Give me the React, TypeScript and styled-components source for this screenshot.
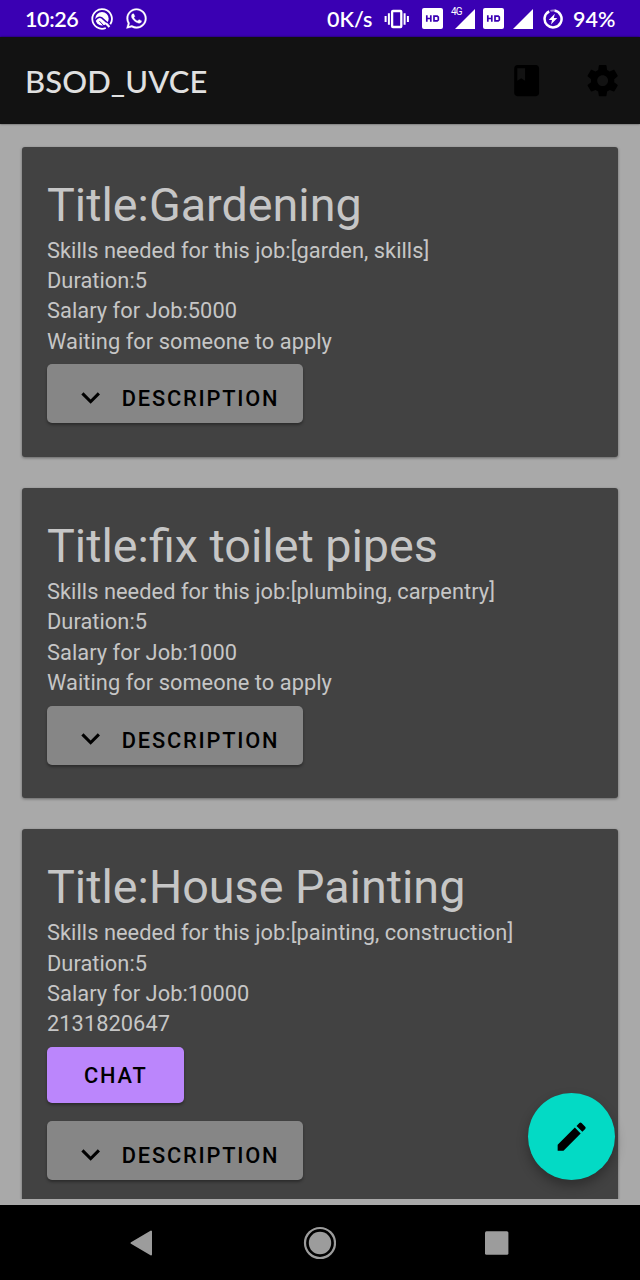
import React from "react";
import styled, { createGlobalStyle } from "styled-components";
import { MdBook, MdEdit, MdExpandMore } from "react-icons/md";
import { FaWhatsapp } from "react-icons/fa";

const GlobalStyle = createGlobalStyle`
  * { box-sizing: border-box; }
  body { margin: 0; background: #a9a9a9; font-family: Roboto, sans-serif; }
`;

const Screen = styled.div`
  position: relative;
  display: flex;
  flex-direction: column;
  width: 640px;
  height: 1280px;
  overflow: hidden;
  background: #a9a9a9;
`;

const StatusBar = styled.header`
  display: flex;
  align-items: center;
  flex: none;
  height: 37px;
  padding: 0 24px 0 25px;
  background: #3a00b3;
  color: #fff;
  svg { display: block; flex: none; }
`;

const StatusText = styled.span<{ $width: number; $spacing?: number }>`
  width: ${(p) => p.$width}px;
  padding-top: 1px;
  font: 600 21.5px/37px Lato, sans-serif;
  letter-spacing: ${(p) => p.$spacing ?? 0}px;
  white-space: nowrap;
`;

const Gap = styled.span<{ $grow?: boolean; $size?: number }>`
  flex: ${(p) => (p.$grow ? "1" : `0 0 ${p.$size}px`)};
`;

const SignalGroup = styled.span`
  display: flex;
  align-items: flex-start;
  height: 20px;
`;

const NetworkLabel = styled.span`
  width: 4px;
  margin-top: -3px;
  font: 400 10px/11px Roboto, sans-serif;
  letter-spacing: -0.8px;
`;

const AppBar = styled.div`
  display: flex;
  align-items: center;
  flex: none;
  height: 87px;
  padding: 0 19px 0 25px;
  background: #121212;
  box-shadow: 0 0 2px rgba(0, 0, 0, 0.6);
`;

const AppTitle = styled.h1`
  flex: 1;
  margin: 0;
  font: 500 31px/40px Lato, sans-serif;
  letter-spacing: 0.1px;
  color: #e0e0e0;
`;

const AppActions = styled.div`
  display: flex;
  gap: 38px;
  color: #000;
  svg { display: block; }
`;

const JobList = styled.main`
  display: flex;
  flex-direction: column;
  gap: 31px;
  flex: 1;
  min-height: 0;
  margin-bottom: 6px;
  padding: 22.5px 22px 0;
  overflow: hidden;
`;

const JobCard = styled.article<{ $height: number }>`
  flex: none;
  height: ${(p) => p.$height}px;
  padding: 27px 25px 0;
  border-radius: 3px;
  background: #424242;
  color: #c6c6c6;
  box-shadow: 0 1px 3px rgba(0, 0, 0, 0.4);
`;

const JobTitle = styled.h2`
  margin: 0 0 0.4px;
  font: 400 46.7px/62px Roboto, sans-serif;
`;

const JobLine = styled.p`
  margin: 0;
  font-size: 21.8px;
  line-height: 30.3px;
  letter-spacing: 0.05px;
`;

const Actions = styled.div`
  display: flex;
  flex-direction: column;
  align-items: flex-start;
  gap: 18px;
  margin-top: 7.2px;
`;

const Button = styled.button<{ $primary?: boolean }>`
  display: flex;
  align-items: center;
  width: ${(p) => (p.$primary ? 137 : 256)}px;
  height: ${(p) => (p.$primary ? 56.5 : 59)}px;
  padding: ${(p) => (p.$primary ? "2px 0 0 37px" : "0 0 0 25px")};
  border: 0;
  border-radius: 5px;
  background: ${(p) => (p.$primary ? "#bb86fc" : "#868686")};
  color: #000;
  font: 500 21.8px/30px Roboto, sans-serif;
  letter-spacing: 1.8px;
  box-shadow: 0 2px 3px rgba(0, 0, 0, 0.35);
`;

const Chevron = styled(MdExpandMore)`
  display: block;
  flex: none;
  margin: 7px 12.5px 0 0;
`;

const ButtonLabel = styled.span<{ $drop?: number }>`
  padding-top: ${(p) => p.$drop ?? 0}px;
`;

const ComposeButton = styled.button`
  position: absolute;
  left: 528px;
  top: 1093px;
  display: grid;
  place-items: center;
  width: 87px;
  height: 87px;
  padding: 0;
  border: 0;
  border-radius: 50%;
  background: #03dac5;
  color: #000;
  box-shadow: 0 6px 12px rgba(0, 0, 0, 0.3);
`;

const NavBar = styled.nav`
  display: flex;
  align-items: center;
  justify-content: space-between;
  flex: none;
  height: 75px;
  padding: 0 131px 0 129px;
  background: #000;
`;

const HdBadge = () => (
  <svg width="21" height="21" viewBox="0 0 21 21">
    <rect x="0" y="0" width="21" height="21" rx="2" fill="#fff" />
    <path
      d="M4.800 7.200v6.600M8.800 7.200v6.600M4.800 10.500h4M12 8.100h3.200l1.100 1v2.800l-1.100 1H12z"
      fill="none"
      stroke="#3a00b3"
      strokeWidth="1.7"
    />
  </svg>
);

const Signal = () => (
  <svg width="20" height="20" viewBox="0 0 20 20">
    <path d="M0 20L20 0V20z" fill="#fff" />
  </svg>
);

const AtNotification = () => (
  <svg width="22" height="22" viewBox="0 0 22 22">
    <path d="M19.300 16.300A9.800 9.800 0 1 0 14.800 20" fill="none" stroke="#fff" strokeWidth="1.800" />
    <circle cx="11" cy="10.800" r="6.700" fill="#fff" />
    <path d="M4 12.600C6 9.800 8.800 8.600 10.800 9.900L17.500 15.800" fill="none" stroke="#3a00b3" strokeWidth="1.600" />
    <path d="M8.500 13.200L13 18" stroke="#3a00b3" strokeWidth="1" />
    <path d="M15 15.300l3.400 3.700" stroke="#fff" strokeWidth="2.200" />
  </svg>
);

const Vibrate = () => (
  <svg width="26" height="20" viewBox="0 0 26 20" fill="none" stroke="#fff">
    <rect x="8.100" y="2" width="9.200" height="16" rx="0.800" strokeWidth="2.300" />
    <path d="M4.900 4.200v11.600M20.600 4.200v11.600" strokeWidth="2" />
    <path d="M1.600 7v6M23.900 7v6" strokeWidth="2" />
  </svg>
);

const SettingsIcon = () => (
  <svg width="37.3" height="37.3" viewBox="0 0 24 24" fill="currentColor">
    <path d="M19.430 12.980c.04-.32.07-.64.07-.98s-.03-.66-.07-.98l2.110-1.650c.19-.15.24-.42.12-.64l-2-3.460c-.12-.22-.39-.3-.61-.22l-2.490 1c-.52-.4-1.080-.73-1.690-.98l-.38-2.650C14.460 2.180 14.250 2 14 2h-4c-.25 0-.46.18-.49.42l-.38 2.650c-.61.25-1.170.59-1.690.98l-2.490-1c-.23-.09-.49 0-.61.22l-2 3.460c-.13.22-.07.49.12.64l2.110 1.650c-.04.32-.07.65-.07.98s.03.66.07.98l-2.110 1.650c-.19.15-.24.42-.12.64l2 3.460c.12.22.39.3.61.22l2.490-1c.52.4 1.080.73 1.690.98l.38 2.650c.03.24.24.42.49.42h4c.25 0 .46-.18.49-.42l.38-2.650c.61-.25 1.170-.59 1.690-.98l2.490 1c.23.09.49 0 .61-.22l2-3.460c.12-.22.07-.49-.12-.64l-2.110-1.650zM12 15.500c-1.930 0-3.500-1.570-3.500-3.500s1.570-3.500 3.500-3.500 3.500 1.570 3.500 3.500-1.570 3.500-3.500 3.500z" />
  </svg>
);

const BatterySaver = () => (
  <svg width="20" height="20" viewBox="0 0 20 20">
    <path d="M11.500 1.500A8.500 8.500 0 1 1 6.200 2.300" fill="none" stroke="#fff" strokeWidth="2.500" />
    <path d="M7.400 1.900A8.500 8.500 0 0 1 11.500 1.600" fill="none" stroke="#fff" strokeOpacity="0.5" strokeWidth="2" />
    <path d="M11.800 4.700L5.700 11h3.300l-1 4.600L14.300 9h-3.500z" fill="#fff" />
  </svg>
);

const BackIcon = () => (
  <svg width="24" height="26" viewBox="0 0 24 26">
    <path d="M2.500 13L22 1.500V24.500z" fill="#9c9c9c" stroke="#9c9c9c" strokeWidth="2" strokeLinejoin="round" />
  </svg>
);

const HomeIcon = () => (
  <svg width="34" height="34" viewBox="0 0 34 34">
    <circle cx="18" cy="17" r="15" fill="none" stroke="#9c9c9c" strokeWidth="2.200" />
    <circle cx="18" cy="17" r="11.200" fill="#9c9c9c" />
  </svg>
);

const RecentsIcon = () => (
  <svg width="24" height="24" viewBox="0 0 24 24">
    <rect x="0" y="0.300" width="23.400" height="23.400" rx="1.500" fill="#9c9c9c" />
  </svg>
);

type Job = {
  title: string;
  skills: string;
  salary: number;
  status: string;
  chat?: boolean;
};

const jobs: Job[] = [
  { title: "Gardening", skills: "garden, skills", salary: 5000, status: "Waiting for someone to apply" },
  { title: "fix toilet pipes", skills: "plumbing, carpentry", salary: 1000, status: "Waiting for someone to apply" },
  { title: "House Painting", skills: "painting, construction", salary: 10000, status: "2131820647", chat: true },
];

export default function App() {
  return (
    <Screen>
      <GlobalStyle />
      <StatusBar>
        <StatusText $width={66} $spacing={-0.4}>10:26</StatusText>
        <AtNotification />
        <Gap $size={12} />
        <FaWhatsapp size={23} stroke="currentColor" strokeWidth={6} />
        <Gap $grow />
        <StatusText $width={57}>0K/s</StatusText>
        <Vibrate />
        <Gap $size={12} />
        <HdBadge />
        <Gap $size={8} />
        <SignalGroup>
          <NetworkLabel>4G</NetworkLabel>
          <Signal />
        </SignalGroup>
        <Gap $size={8} />
        <HdBadge />
        <Gap $size={9} />
        <Signal />
        <Gap $size={10} />
        <BatterySaver />
        <Gap $size={10} />
        <StatusText $width={43}>94%</StatusText>
      </StatusBar>
      <AppBar>
        <AppTitle>BSOD_UVCE</AppTitle>
        <AppActions>
          <MdBook size={37.3} />
          <SettingsIcon />
        </AppActions>
      </AppBar>
      <JobList>
        {jobs.map((job) => (
          <JobCard key={job.title} $height={job.chat ? 400 : 310.3}>
            <JobTitle>Title:{job.title}</JobTitle>
            <JobLine>Skills needed for this job:[{job.skills}]</JobLine>
            <JobLine>Duration:5</JobLine>
            <JobLine>Salary for Job:{job.salary}</JobLine>
            <JobLine>{job.status}</JobLine>
            <Actions>
              {job.chat && (
                <Button $primary>
                  <ButtonLabel>CHAT</ButtonLabel>
                </Button>
              )}
              <Button>
                <Chevron size={37.3} />
                <ButtonLabel $drop={11}>DESCRIPTION</ButtonLabel>
              </Button>
            </Actions>
          </JobCard>
        ))}
      </JobList>
      <ComposeButton aria-label="New job">
        <MdEdit size={37.3} />
      </ComposeButton>
      <NavBar>
        <BackIcon />
        <HomeIcon />
        <RecentsIcon />
      </NavBar>
    </Screen>
  );
}
